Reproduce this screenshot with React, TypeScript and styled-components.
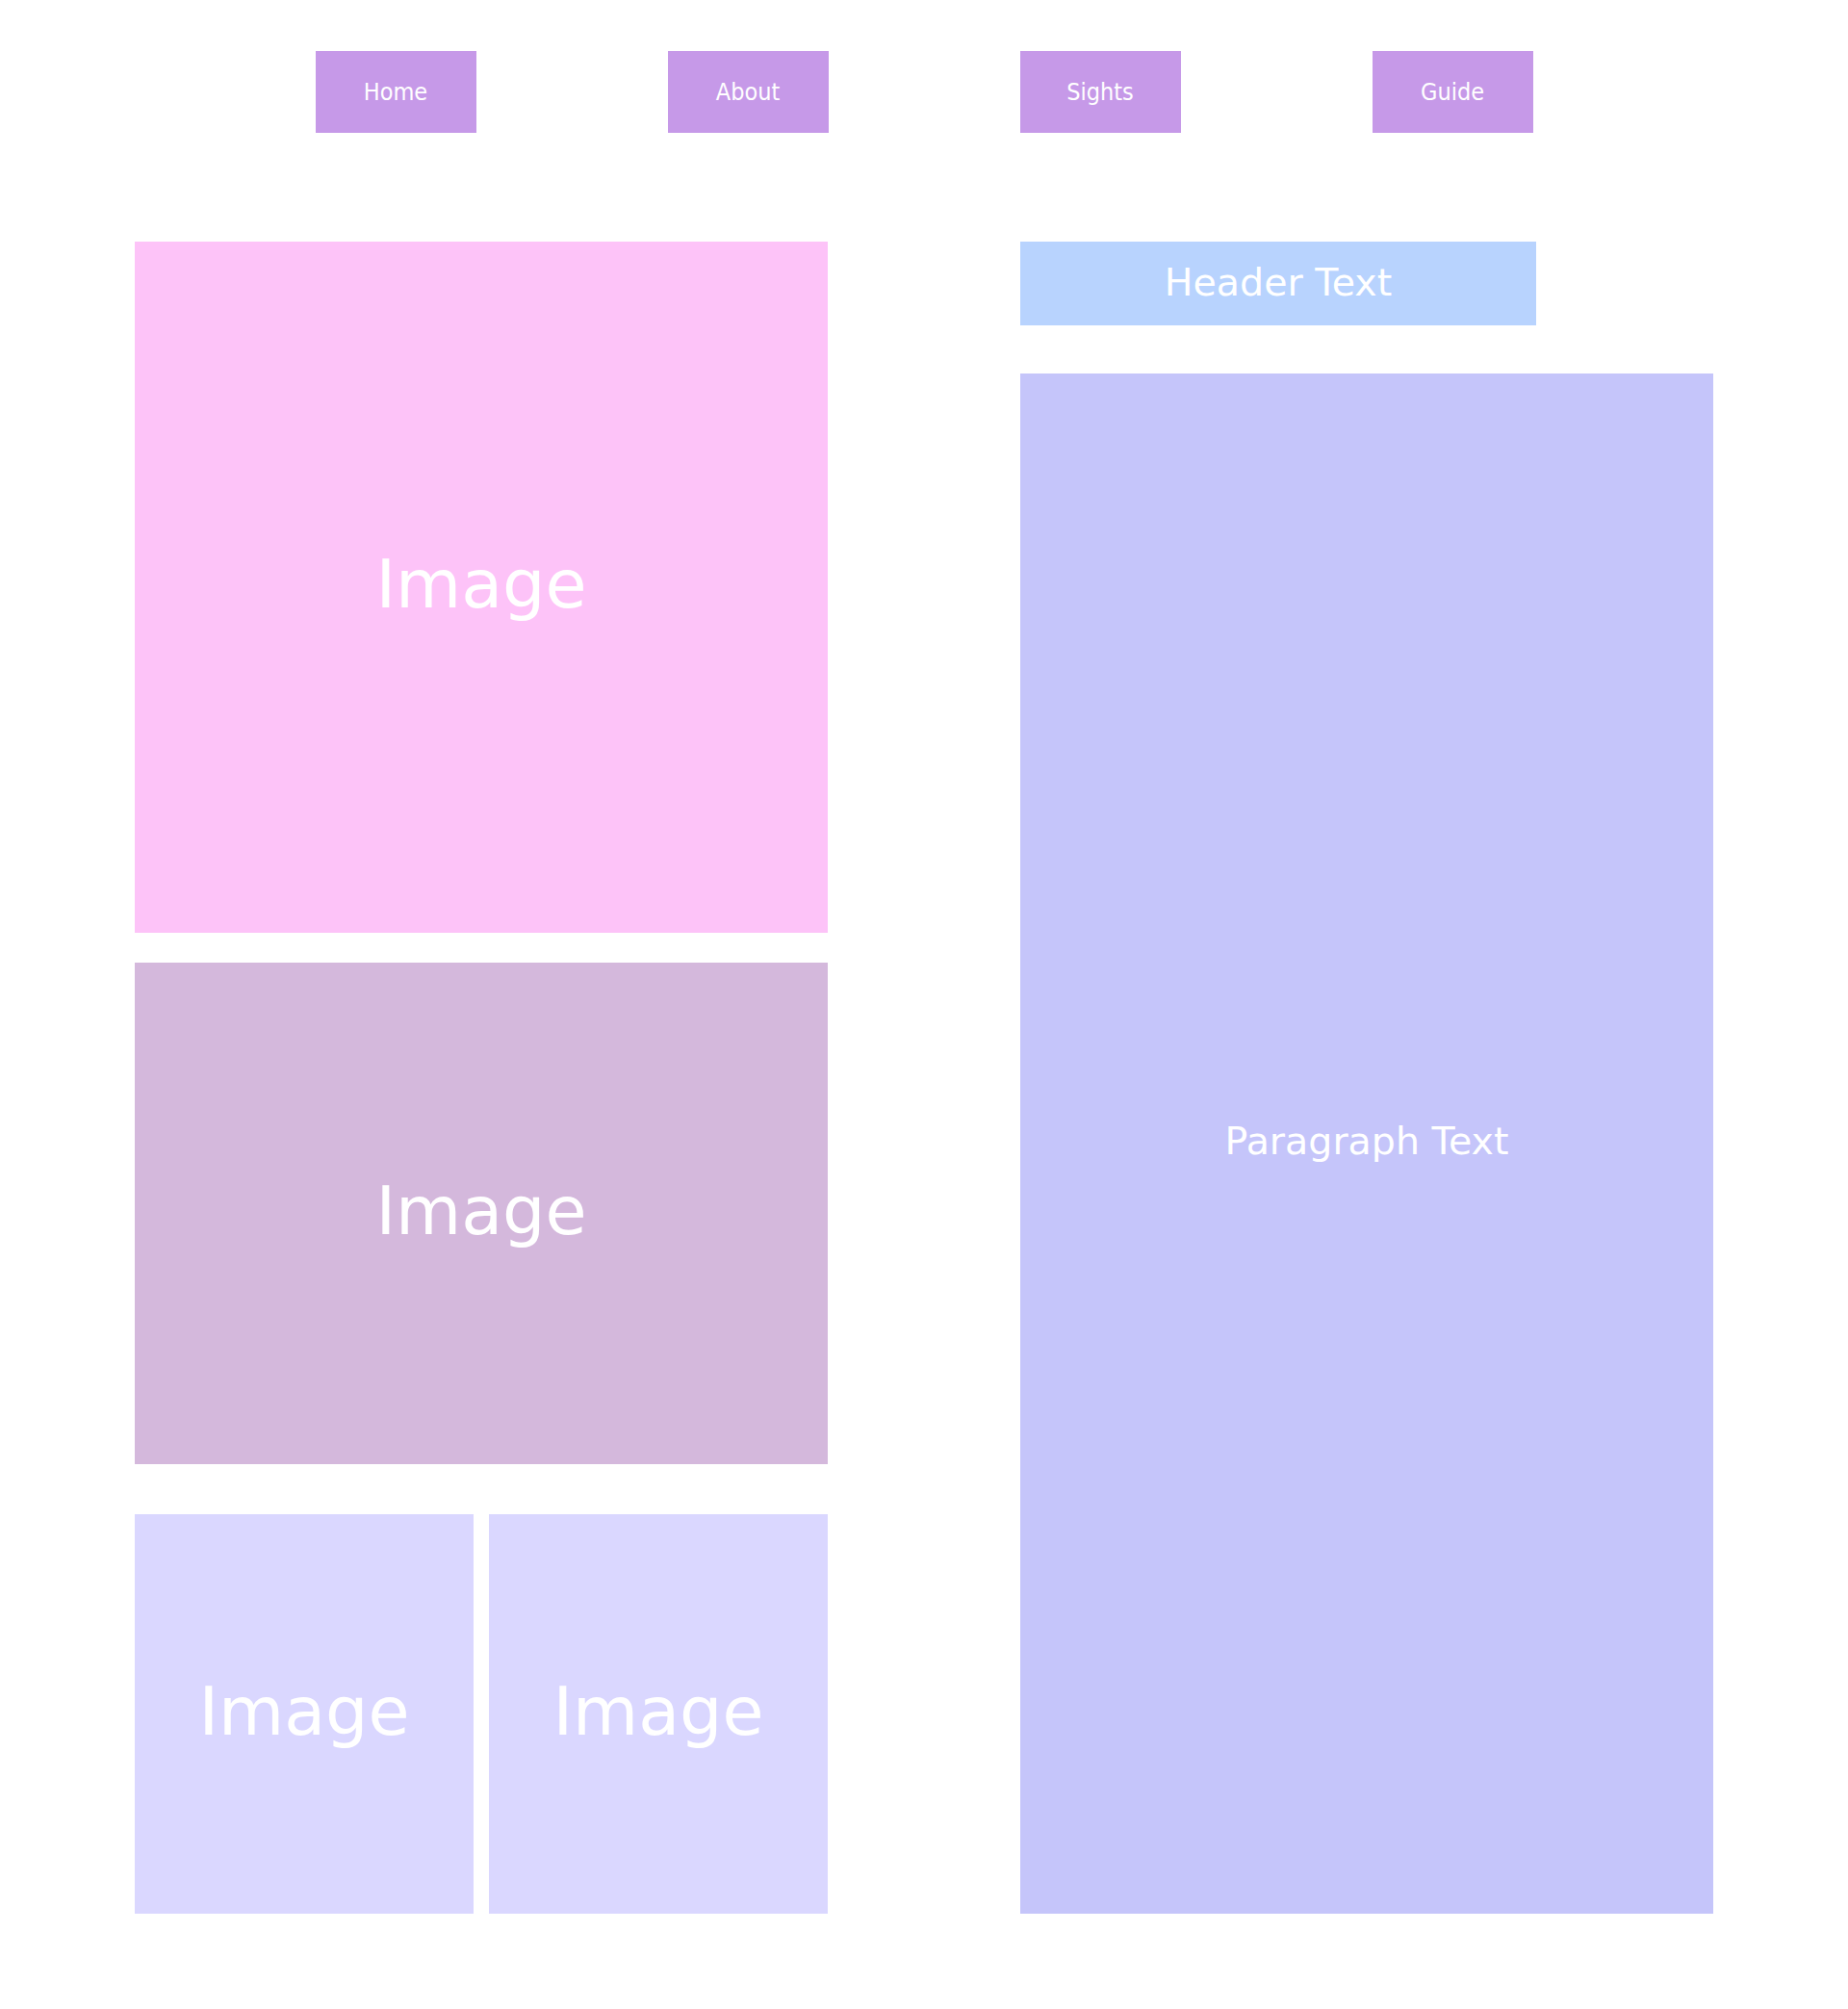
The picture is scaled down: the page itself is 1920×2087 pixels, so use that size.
import styled, { createGlobalStyle } from 'styled-components';

const GlobalStyle = createGlobalStyle`
  html, body {
    margin: 0;
    padding: 0;
    background: #ffffff;
  }

  body {
    font-family: "DejaVu Sans", sans-serif;
    color: #ffffff;
  }
`;

const Page = styled.div`
  width: 1920px;
  min-height: 2087px;
  box-sizing: border-box;
  padding-top: 53px;
`;

const Nav = styled.nav`
  display: flex;
  justify-content: center;
  gap: 199px;
`;

const NavButton = styled.a`
  width: 167px;
  height: 85px;
  display: flex;
  align-items: center;
  justify-content: center;
  background: #c699e8;
  color: #ffffff;
  font-family: "DejaVu Sans Condensed", "DejaVu Sans", sans-serif;
  font-size: 25px;
  text-decoration: none;
  cursor: pointer;
`;

const Main = styled.main`
  display: grid;
  grid-template-columns: 720px 720px;
  column-gap: 200px;
  padding: 0 140px;
  margin-top: 113px;
`;

const LeftColumn = styled.div`
  display: flex;
  flex-direction: column;
`;

const RightColumn = styled.div`
  display: flex;
  flex-direction: column;
`;

const Block = styled.div<{ $bg: string; $h: number; $mt?: number }>`
  height: ${(p) => p.$h}px;
  margin-top: ${(p) => p.$mt ?? 0}px;
  background: ${(p) => p.$bg};
  display: flex;
  align-items: center;
  justify-content: center;
  font-size: 70px;
  padding-bottom: 6px;
  box-sizing: border-box;
`;

const Pair = styled.div`
  display: grid;
  grid-template-columns: 1fr 1fr;
  gap: 16px;
  margin-top: 52px;
`;

const Header = styled.h1`
  width: 536px;
  height: 87px;
  margin: 0;
  background: #b8d3fe;
  display: flex;
  align-items: center;
  justify-content: center;
  font-size: 39.5px;
  font-weight: normal;
  padding-bottom: 3px;
  box-sizing: border-box;
`;

const Paragraph = styled.p`
  height: 1600px;
  margin: 50px 0 0;
  background: #c5c5fa;
  display: flex;
  align-items: center;
  justify-content: center;
  font-size: 39.5px;
  padding-bottom: 6px;
  box-sizing: border-box;
`;

const navItems = ['Home', 'About', 'Sights', 'Guide'];

export default function App() {
  return (
    <Page>
      <GlobalStyle />
      <Nav>
        {navItems.map((item) => (
          <NavButton key={item}>{item}</NavButton>
        ))}
      </Nav>
      <Main>
        <LeftColumn>
          <Block $bg="#fdc3f8" $h={718}>Image</Block>
          <Block $bg="#d4b8dc" $h={521} $mt={31}>Image</Block>
          <Pair>
            <Block $bg="#dad7ff" $h={415}>Image</Block>
            <Block $bg="#dad7ff" $h={415}>Image</Block>
          </Pair>
        </LeftColumn>
        <RightColumn>
          <Header>Header Text</Header>
          <Paragraph>Paragraph Text</Paragraph>
        </RightColumn>
      </Main>
    </Page>
  );
}
